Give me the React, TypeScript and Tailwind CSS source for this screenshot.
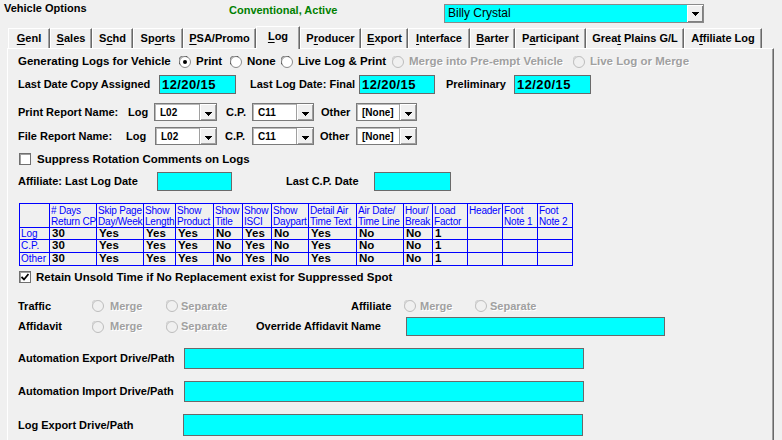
import type { ReactNode } from "react";

const disabledText = "text-[#a0a0a0] [text-shadow:1px_1px_0_#ffffff]";

function Arrow() {
  return (
    <svg width="7" height="4" viewBox="0 0 7 4" shapeRendering="crispEdges">
      <path d="M0 0H7V1H6V2H5V3H4V4H3V3H2V2H1V1H0Z" fill="#000" />
    </svg>
  );
}

function Radio({ checked = false, disabled = false }: { checked?: boolean; disabled?: boolean }) {
  return (
    <svg width="12" height="12" viewBox="0 0 12 12" className="shrink-0">
      <circle cx="6" cy="6" r="5.5" fill={disabled ? "#f0f0f0" : "#ffffff"} stroke={disabled ? "#bcbcbc" : "#8a8a8a"} />
      <path d="M1.2 8.5A5 5 0 0 1 8.5 1.2" fill="none" stroke={disabled ? "#c8c8c8" : "#5a5a5a"} />
      {checked && <circle cx="6" cy="6" r="2" fill="#000" />}
    </svg>
  );
}

function Check({ checked = false }: { checked?: boolean }) {
  return (
    <span className="flex h-[12px] w-[12px] shrink-0 items-center justify-center border border-[#707070] bg-white shadow-[inset_1px_1px_0_#a0a0a0]">
      {checked && (
        <svg width="8" height="8" viewBox="0 0 8 8">
          <path d="M0.5 4L3 6.5L7.5 1" fill="none" stroke="#000" strokeWidth="1.8" />
        </svg>
      )}
    </span>
  );
}

function Option({
  w,
  label,
  checked,
  disabled,
  gap = "ml-[5px]",
}: {
  w: string;
  label: string;
  checked?: boolean;
  disabled?: boolean;
  gap?: string;
}) {
  return (
    <div className={`flex shrink-0 items-center ${w}`}>
      <Radio checked={checked} disabled={disabled} />
      <span className={`${gap} whitespace-nowrap ${disabled ? disabledText : ""}`}>{label}</span>
    </div>
  );
}

function Field({ w, h = "h-[19px]", text }: { w: string; h?: string; text?: string }) {
  return (
    <div
      className={`flex shrink-0 items-center border border-[#6a6a6a] bg-[#00ffff] pl-[2px] text-[13px] font-bold tracking-[0.4px] ${w} ${h}`}
    >
      {text}
    </div>
  );
}

function Combo({ w, text }: { w: string; text: string }) {
  return (
    <div className={`flex h-[18px] shrink-0 border border-[#7a7a7a] bg-white shadow-[inset_1px_1px_0_#b8b8b8] ${w}`}>
      <span className="flex-1 pl-[5px] pt-[1px] text-[10px] leading-[15px]">{text}</span>
      <span className="flex w-[17px] items-end justify-center border-l border-[#a0a0a0] bg-[#f0f0f0] pb-[4px] shadow-[inset_1px_1px_0_#ffffff,inset_-1px_-1px_0_#a0a0a0]">
        <Arrow />
      </span>
    </div>
  );
}

function Label({ w, children, className = "" }: { w: string; children: ReactNode; className?: string }) {
  return <span className={`shrink-0 whitespace-nowrap ${w} ${className}`}>{children}</span>;
}

const tabs: Array<{ w: string; pre: string; key: string; post: string; active?: boolean }> = [
  { w: "w-[42px]", pre: "", key: "G", post: "enl" },
  { w: "w-[42px]", pre: "", key: "S", post: "ales" },
  { w: "w-[41px]", pre: "S", key: "c", post: "hd" },
  { w: "w-[50px]", pre: "Sp", key: "o", post: "rts" },
  { w: "w-[73px]", pre: "", key: "P", post: "SA/Promo" },
  { w: "w-[44px]", pre: "", key: "L", post: "og", active: true },
  { w: "w-[61px]", pre: "P", key: "r", post: "oducer" },
  { w: "w-[47px]", pre: "", key: "E", post: "xport" },
  { w: "w-[62px]", pre: "", key: "I", post: "nterface" },
  { w: "w-[45px]", pre: "", key: "B", post: "arter" },
  { w: "w-[71px]", pre: "P", key: "a", post: "rticipant" },
  { w: "w-[98px]", pre: "Grea", key: "t", post: " Plains G/L" },
  { w: "w-[78px]", pre: "A", key: "f", post: "filiate Log" },
];

const headers = [
  ["", ""],
  ["# Days", "Return CP"],
  ["Skip Page", "Day/Week"],
  ["Show", "Length"],
  ["Show", "Product"],
  ["Show", "Title"],
  ["Show", "ISCI"],
  ["Show", "Daypart"],
  ["Detail Air", "Time Text"],
  ["Air Date/", "Time Line"],
  ["Hour/", "Break"],
  ["Load", "Factor"],
  ["Header", ""],
  ["Foot", "Note 1"],
  ["Foot", "Note 2"],
];

const values = ["30", "Yes", "Yes", "Yes", "No", "Yes", "No", "Yes", "No", "No", "1", "", "", ""];
const rowNames = ["Log", "C.P.", "Other"];

function OptionsTable() {
  return (
    <div className="ml-[1px] mt-[12px] grid w-[554px] shrink-0 grid-cols-[29px_46px_46px_31px_37px_28px_28px_36px_47px_46px_28px_34px_34px_34px_34px] grid-rows-[23px_11px_12px_12px] gap-px bg-[#0000ff] p-px">
      {headers.map(([a, b], i) => (
        <div
          key={i}
          className="overflow-hidden whitespace-nowrap bg-[#f0f0f0] pl-[1px] pt-px text-[10px] font-normal leading-[11px] tracking-[-0.2px] text-[#0000ff]"
        >
          <div>{a}</div>
          <div>{b}</div>
        </div>
      ))}
      {rowNames.map((name) => (
        <Row key={name} name={name} />
      ))}
    </div>
  );
}

function Row({ name }: { name: string }) {
  return (
    <>
      <div className="overflow-hidden whitespace-nowrap bg-[#f0f0f0] pl-[1px] text-[10px] font-normal leading-[11px] text-[#0000ff]">
        {name}
      </div>
      {values.map((v, i) => (
        <div key={i} className="overflow-hidden whitespace-nowrap bg-[#f0f0f0] pl-[2px] text-[11.5px] font-bold leading-[11px]">
          {v}
        </div>
      ))}
    </>
  );
}

export default function App() {
  return (
    <div className="h-[440px] w-[782px] overflow-hidden bg-[#f0f0f0] text-[11px] font-bold leading-[13px] text-black [font-family:'Liberation_Sans',Arial,sans-serif]">
      <div className="flex h-[26px] items-start">
        <span className="w-[229px] shrink-0 pl-[4px] pt-[2px]">Vehicle Options</span>
        <span className="w-[215px] shrink-0 pt-[4px] text-[#008000]">Conventional, Active</span>
        <div className="mt-[4px] flex h-[19px] w-[260px] shrink-0 border border-[#8a8a8a] bg-[#00ffff]">
          <span className="flex-1 pl-[3px] text-[12px] font-normal leading-[17px]">Billy Crystal</span>
          <span className="flex w-[16px] items-center justify-center bg-[#f0f0f0] shadow-[inset_1px_1px_0_#ffffff,inset_-1px_-1px_0_#808080]">
            <Arrow />
          </span>
        </div>
      </div>

      <div className="flex h-[22px] items-end pl-[8px]">
        {tabs.map((t) => (
          <div
            key={t.post}
            className={`flex shrink-0 items-center justify-center border-l border-r border-t border-white border-r-[#696969] bg-[#f0f0f0] shadow-[inset_-1px_0_0_#a0a0a0] ${t.w} ${
              t.active ? "relative z-10 -mb-px h-[23px] pb-[3px]" : "h-[20px]"
            }`}
          >
            <span className="whitespace-nowrap">
              {t.pre}
              <span className="underline underline-offset-2">{t.key}</span>
              {t.post}
            </span>
          </div>
        ))}
      </div>

      <div className="ml-[7px] flex h-[400px] w-[767px] flex-col border-l border-r border-t border-white border-r-[#696969] pl-[10px] shadow-[inset_-1px_0_0_#a0a0a0]">
        <div className="mt-[4px] flex h-[17px] items-center text-[11.5px]">
          <Label w="w-[161px]">Generating Logs for Vehicle</Label>
          <Option w="w-[51px]" label="Print" checked />
          <Option w="w-[51px]" label="None" />
          <Option w="w-[111px]" label="Live Log & Print" />
          <Option w="w-[181px]" label="Merge into Pre-empt Vehicle" disabled />
          <Option w="w-[120px]" label="Live Log or Merge" disabled />
        </div>

        <div className="mt-[5px] flex h-[19px] items-center">
          <Label w="w-[141px]">Last Date Copy Assigned</Label>
          <Field w="w-[77px]" text="12/20/15" />
          <Label w="w-[109px]" className="ml-[14px]">
            Last Log Date: Final
          </Label>
          <Field w="w-[76px]" text="12/20/15" />
          <Label w="w-[68px]" className="ml-[11px]">
            Preliminary
          </Label>
          <Field w="w-[77px]" text="12/20/15" />
        </div>

        <div className="mt-[9px] flex h-[18px] items-center">
          <Label w="w-[110px]">Print Report Name:</Label>
          <Label w="w-[26px]">Log</Label>
          <Combo w="w-[63px]" text="L02" />
          <Label w="w-[26px]" className="ml-[9px]">
            C.P.
          </Label>
          <Combo w="w-[62px]" text="C11" />
          <Label w="w-[35px]" className="ml-[7px]">
            Other
          </Label>
          <Combo w="w-[61px]" text="[None]" />
        </div>

        <div className="mt-[6px] flex h-[18px] items-center">
          <Label w="w-[108px]">File Report Name:</Label>
          <Label w="w-[29px]">Log</Label>
          <Combo w="w-[62px]" text="L02" />
          <Label w="w-[27px]" className="ml-[8px]">
            C.P.
          </Label>
          <Combo w="w-[62px]" text="C11" />
          <Label w="w-[36px]" className="ml-[6px]">
            Other
          </Label>
          <Combo w="w-[61px]" text="[None]" />
        </div>

        <div className="mt-[8px] flex h-[12px] items-center pl-[1px] text-[11.5px]">
          <Check />
          <span className="ml-[6px] whitespace-nowrap">Suppress Rotation Comments on Logs</span>
        </div>

        <div className="mt-[7px] flex h-[19px] items-center">
          <Label w="w-[139px]">Affiliate: Last Log Date</Label>
          <Field w="w-[75px]" />
          <Label w="w-[88px]" className="ml-[54px]">
            Last C.P. Date
          </Label>
          <Field w="w-[77px]" />
        </div>

        <OptionsTable />

        <div className="mt-[5px] flex h-[12px] items-center pl-[1px] text-[11.5px]">
          <Check checked />
          <span className="ml-[5px] whitespace-nowrap">Retain Unsold Time if No Replacement exist for Suppressed Spot</span>
        </div>

        <div className="mt-[16px] flex h-[14px] items-center">
          <Label w="w-[74px]">Traffic</Label>
          <Option w="w-[74px]" label="Merge" disabled gap="ml-[6px]" />
          <Option w="w-[185px]" label="Separate" disabled gap="ml-[3px]" />
          <Label w="w-[53px]">Affiliate</Label>
          <Option w="w-[71px]" label="Merge" disabled gap="ml-[4px]" />
          <Option w="w-[90px]" label="Separate" disabled gap="ml-[3px]" />
        </div>

        <div className="mt-[4px] flex h-[19px] items-center">
          <Label w="w-[74px]">Affidavit</Label>
          <Option w="w-[74px]" label="Merge" disabled gap="ml-[6px]" />
          <Option w="w-[90px]" label="Separate" disabled gap="ml-[3px]" />
          <Label w="w-[150px]">Override Affidavit Name</Label>
          <Field w="w-[259px]" />
        </div>

        <div className="mt-[12px] flex h-[21px] items-center">
          <Label w="w-[166px]">Automation Export Drive/Path</Label>
          <Field w="w-[400px]" h="h-[21px]" />
        </div>

        <div className="mt-[12px] flex h-[21px] items-center">
          <Label w="w-[166px]">Automation Import Drive/Path</Label>
          <Field w="w-[400px]" h="h-[21px]" />
        </div>

        <div className="mt-[12px] flex h-[22px] items-center">
          <Label w="w-[165px]">Log Export Drive/Path</Label>
          <Field w="w-[400px]" h="h-[22px]" />
        </div>
      </div>
    </div>
  );
}
